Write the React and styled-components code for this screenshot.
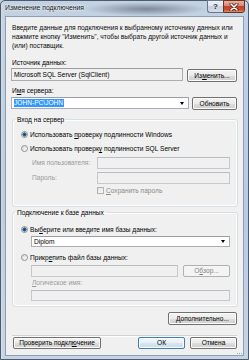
import React from 'react'
import styled, { createGlobalStyle } from 'styled-components'

const GlobalStyle = createGlobalStyle`
  html, body { margin: 0; padding: 0; background: #bfcfe0; }
  body { font-family: "Liberation Sans", Arial, sans-serif; }
  * { box-sizing: border-box; }
`;

function App() {
    return (
        <>
            <GlobalStyle />
            <Window>
                <TitleBar>
                    <Title>Изменение подключения</Title>
                    <Caption>
                        <HelpButton>?</HelpButton>
                        <CloseButton>
                            <svg width="10" height="8" viewBox="0 0 10 8">
                                <path d="M2 1 L8 7 M8 1 L2 7" stroke="#3a2018" strokeWidth="3" strokeLinecap="round" />
                                <path d="M2 1 L8 7 M8 1 L2 7" stroke="#ffffff" strokeWidth="1.6" strokeLinecap="round" />
                            </svg>
                        </CloseButton>
                    </Caption>
                </TitleBar>
                <Client>
                    <Description>
                        Введите данные для подключения к выбранному источнику данных или<br />
                        нажмите кнопку "Изменить", чтобы выбрать другой источник данных и<br />
                        (или) поставщик.
                    </Description>
                    <Label $top={8}>Источник данных:</Label>
                    <Row $top={1}>
                        <Field $w={172} $h={13} $readonly>Microsoft SQL Server (SqlClient)</Field>
                        <Button $w={50} $h={13} $offset={1}>Из<u>м</u>енить...</Button>
                    </Row>
                    <Label $top={4.5}>И<u>м</u>я сервера:</Label>
                    <Row $top={1.5}>
                        <Field $w={178} $h={12}>
                            <Selected>JOHN-PC\JOHN</Selected>
                            <Arrow />
                        </Field>
                        <Button $w={45} $h={13}>Обновить</Button>
                    </Row>

                    <Group $top={5.5} $padTop={3.5} $padBottom={10.5}>
                        <Legend>Вход на сервер</Legend>
                        <Option $h={14}>
                            <Radio $checked />
                            Использовать <u>п</u>роверку подлинности Windows
                        </Option>
                        <Option $h={14}>
                            <Radio />
                            Использовать проверк<u>у</u> подлинности SQL Server
                        </Option>
                        <FieldRow $top={1}>
                            <FieldLabel>Имя пользователя:</FieldLabel>
                            <Field $w={133} $h={12} $disabled />
                        </FieldRow>
                        <FieldRow $top={3}>
                            <FieldLabel>Пароль:</FieldLabel>
                            <Field $w={133} $h={12} $disabled />
                        </FieldRow>
                        <CheckRow>
                            <Check />
                            <u>С</u>охранить пароль
                        </CheckRow>
                    </Group>

                    <Group $top={1.5} $padTop={7.5} $padBottom={5}>
                        <Legend>Подключение к базе данных</Legend>
                        <Option $h={10}>
                            <Radio $checked />
                            Вы<u>б</u>ерите или введите имя базы данных:
                        </Option>
                        <Indent $top={1}>
                            <Field $w={199} $h={11}>
                                Diplom
                                <Arrow />
                            </Field>
                        </Indent>
                        <Option $h={10} $top={6}>
                            <Radio />
                            Прикр<u>е</u>пить файл базы данных:
                        </Option>
                        <Indent $top={2} $gap={5}>
                            <Field $w={147} $h={12} $disabled />
                            <Button $w={47} $h={12} $disabled>О<u>б</u>зор...</Button>
                        </Indent>
                        <SubLabel><u>Л</u>огическое имя:</SubLabel>
                        <Indent $top={2.5}>
                            <Field $w={199} $h={11} $disabled />
                        </Indent>
                    </Group>

                    <AdvancedButton $w={69} $h={13}><u>Д</u>ополнительно...</AdvancedButton>
                    <Separator />
                    <Footer>
                        <Button $w={88} $h={12}>Проверить подкл<u>ю</u>чение</Button>
                        <FooterRight>
                            <Button $w={47} $h={12} $default>ОК</Button>
                            <Button $w={47} $h={12}>Отмена</Button>
                        </FooterRight>
                    </Footer>
                    <Grip>
                        <i /><i /><i />
                    </Grip>
                </Client>
            </Window>
        </>
    )
}

export default App;

const Window = styled.div`
    width: 249px;
    height: 360px;
    display: flex;
    flex-direction: column;
    padding: 0 4px 3px 4px;
    border: 1px solid #4c5b6d;
    border-radius: 5px 5px 0 0;
    background:
        linear-gradient(to right, rgba(255,255,255,0.25), rgba(255,255,255,0) 3px),
        linear-gradient(180deg, #c3d2e2 0%, #bccbdc 60%, #c6d4e3 100%);
`;

const TitleBar = styled.div`
    height: 15px;
    margin: 0 -4px;
    padding: 0 3px 0 4px;
    display: flex;
    justify-content: space-between;
    align-items: flex-start;
    background: radial-gradient(ellipse 62px 7px at 145px 8px, rgba(70, 78, 96, 0.55), rgba(70, 78, 96, 0));
`;

const Title = styled.div`
    padding-top: 2px;
    font-size: 6.8px;
    line-height: 9px;
    color: #111;
    text-shadow: 0 0 3px #fff, 0 0 2px #fff;
    white-space: nowrap;
`;

const Caption = styled.div`
    display: flex;
    margin-top: -1px;
`;

const HelpButton = styled.div`
    width: 16px;
    height: 13px;
    display: flex;
    align-items: center;
    justify-content: center;
    font-size: 8px;
    font-weight: bold;
    color: #2a3340;
    border: 1px solid #687789;
    border-right: none;
    border-radius: 0 0 0 3px;
    background: linear-gradient(180deg, #eef2f7 0%, #dfe6ee 45%, #c6d2df 50%, #d4dee9 100%);
`;

const CloseButton = styled.div`
    width: 22px;
    height: 13px;
    display: flex;
    align-items: center;
    justify-content: center;
    border: 1px solid #6b3325;
    border-radius: 0 0 3px 0;
    background: linear-gradient(180deg, #eab0a0 0%, #dc8470 45%, #c2432a 50%, #cf4d2e 80%, #e58d67 100%);
`;

const Client = styled.div`
    position: relative;
    flex: 1;
    display: flex;
    flex-direction: column;
    padding: 0 6px 0 5px;
    border: 1px solid #8c9fb5;
    background: #f0f0f0;
    font-size: 6.6px;
    line-height: 9px;
    color: #000;
    white-space: nowrap;
`;

const Description = styled.div`
    margin-top: 5.5px;
    padding-left: 1px;
    color: #0a0a0a;
`;

const Label = styled.div`
    margin-top: ${p => p.$top}px;
    padding-left: 1px;
`;

const Row = styled.div`
    display: flex;
    align-items: flex-start;
    justify-content: space-between;
    margin-top: ${p => p.$top}px;
`;

const Field = styled.div`
    position: relative;
    width: ${p => p.$w}px;
    height: ${p => p.$h}px;
    display: flex;
    align-items: center;
    padding: 0 2px;
    border: 1px solid ${p => p.$disabled ? '#c5c8cc' : '#abadb3'};
    border-top-color: ${p => p.$disabled ? '#b9bcc0' : '#9a9da3'};
    background: ${p => (p.$readonly || p.$disabled) ? '#f0f0f0' : '#ffffff'};
    color: #000;
`;

const Selected = styled.span`
    background: #3399ff;
    color: #fff;
    line-height: 8px;
    padding: 0 1px 0 0;
`;

const Arrow = styled.span`
    position: absolute;
    right: 4px;
    top: 50%;
    margin-top: -1px;
    border-left: 2.5px solid transparent;
    border-right: 2.5px solid transparent;
    border-top: 3px solid #000;
`;

const Button = styled.div`
    width: ${p => p.$w}px;
    height: ${p => p.$h}px;
    margin-top: ${p => p.$offset || 0}px;
    display: flex;
    align-items: center;
    justify-content: center;
    border: 1px solid ${p => p.$disabled ? '#adb2b5' : p.$default ? '#3c7fb1' : '#707070'};
    border-radius: 2px;
    color: ${p => p.$disabled ? '#838383' : '#000'};
    background: ${p => p.$disabled
        ? '#f4f4f4'
        : p.$default
            ? 'linear-gradient(180deg, #f2f7fb 0%, #e5eff8 50%, #d7e6f3 51%, #c9dcee 100%)'
            : 'linear-gradient(180deg, #f2f2f2 0%, #ebebeb 50%, #dddddd 51%, #cfcfcf 100%)'};
    box-shadow: inset 0 0 0 1px ${p => p.$disabled ? '#f4f4f4' : '#fcfcfc'};
`;

const Group = styled.fieldset`
    margin: ${p => p.$top}px -1px 0 1px;
    padding: ${p => p.$padTop}px 7px ${p => p.$padBottom}px 8px;
    border: 1px solid #d5dfe5;
    border-radius: 3px;
    box-shadow: inset 0 0 0 1px #ffffff;
    min-width: 0;
`;

const Legend = styled.legend`
    margin-left: -6px;
    padding: 0 2px;
    font-size: 6.6px;
    line-height: 9px;
`;

const Option = styled.div`
    height: ${p => p.$h}px;
    margin-top: ${p => p.$top || 0}px;
    display: flex;
    align-items: center;
    white-space: pre;
`;

const Radio = styled.span`
    width: 7px;
    height: 7px;
    margin-right: 2px;
    border-radius: 50%;
    border: 1px solid #8e8f8f;
    background: ${p => p.$checked
        ? 'radial-gradient(circle at 50% 50%, #1d3b5e 0, #2f6190 1.4px, #6a8fb4 2px, #e6eaee 2.3px, #fbfbfb 100%)'
        : 'linear-gradient(135deg, #d5d6d8, #ffffff)'};
`;

const FieldRow = styled.div`
    display: flex;
    align-items: center;
    margin-top: ${p => p.$top}px;
`;

const FieldLabel = styled.div`
    width: 76px;
    padding-left: 11px;
    color: #9a9a9a;
`;

const CheckRow = styled.div`
    height: 9px;
    margin-top: 2.5px;
    margin-left: 76px;
    display: flex;
    align-items: center;
    color: #8a8a8a;
`;

const Check = styled.span`
    width: 7px;
    height: 7px;
    margin-right: 2px;
    border: 1px solid #b1b1b1;
    background: linear-gradient(135deg, #e3e3e3, #fafafa);
`;

const Indent = styled.div`
    display: flex;
    gap: ${p => p.$gap || 0}px;
    margin-top: ${p => p.$top}px;
    margin-left: 10px;
`;

const SubLabel = styled.div`
    margin-top: 1.5px;
    margin-left: 11px;
    color: #9a9a9a;
`;

const AdvancedButton = styled(Button)`
    align-self: flex-end;
    margin-top: 5px;
`;

const Separator = styled.div`
    margin: 10px 0 0 1px;
    height: 2px;
    border-top: 1px solid #d2d2d2;
    border-bottom: 1px solid #ffffff;
`;

const Footer = styled.div`
    display: flex;
    justify-content: space-between;
    padding-left: 2px;
`;

const FooterRight = styled.div`
    display: flex;
    gap: 5px;
`;

const Grip = styled.div`
    position: absolute;
    right: 1px;
    bottom: 1px;
    display: flex;
    gap: 1px;
    i {
        width: 1px;
        height: 1px;
        background: #9aa6b4;
    }
`;
